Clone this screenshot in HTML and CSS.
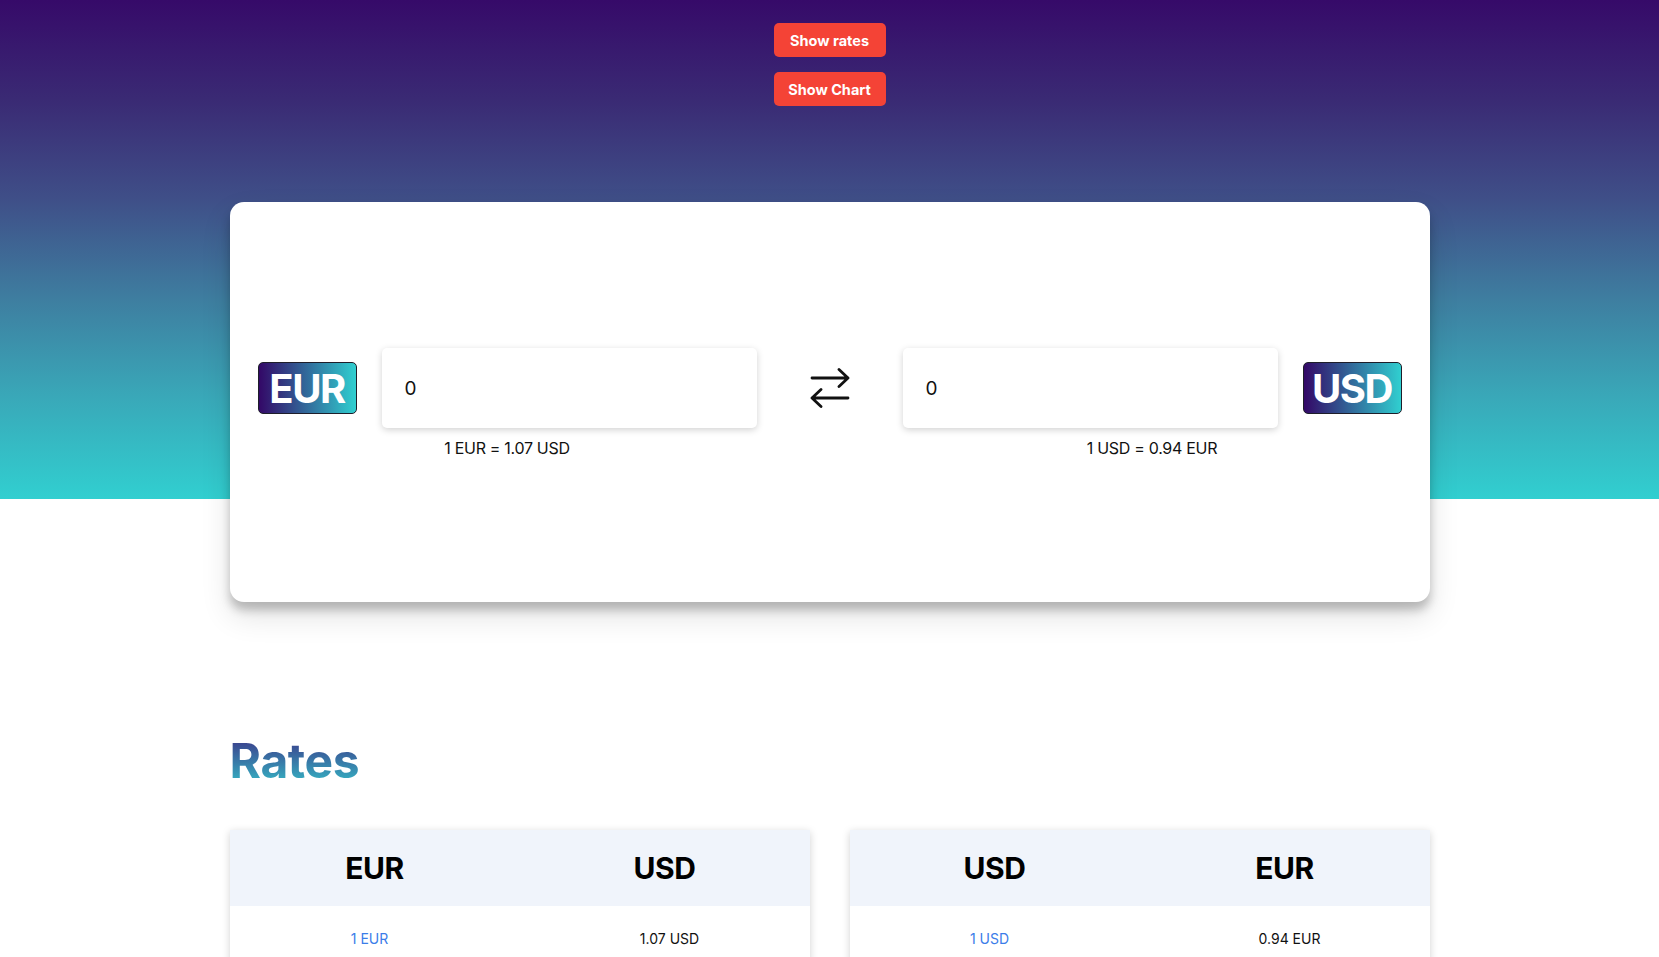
FILE: index.html
```html
<!DOCTYPE html>
<html lang="en">
<head>
<meta charset="utf-8">
<title>Currency Converter</title>
<link rel="stylesheet" href="styles.css">
</head>
<body>
  <header class="top-actions">
    <button class="btn-red" type="button">Show rates</button>
    <button class="btn-red" type="button">Show Chart</button>
  </header>

  <main class="container">
    <section class="converter-card">
      <div class="converter-row">
        <div class="side">
          <div class="side-row">
            <span class="badge">EUR</span>
            <div class="amount-input">0</div>
          </div>
          <p class="rate-note">1 EUR = 1.07 USD</p>
        </div>

        <div class="swap">
          <svg class="swap-icon" viewBox="0 0 40 40" width="40" height="40" fill="none" stroke="#111" stroke-width="2.8" stroke-linecap="round" stroke-linejoin="round">
            <path d="M2 10H38M29 1.5L38 10L29 18.5"/>
            <path d="M38 30H2M11 21.5L2 30L11 38.5"/>
          </svg>
        </div>

        <div class="side">
          <div class="side-row">
            <div class="amount-input">0</div>
            <span class="badge">USD</span>
          </div>
          <p class="rate-note">1 USD = 0.94 EUR</p>
        </div>
      </div>
    </section>

    <h1 class="rates-title">Rates</h1>

    <div class="rates-grid">
      <table class="rate-table">
        <thead>
          <tr><th>EUR</th><th>USD</th></tr>
        </thead>
        <tbody>
          <tr><td class="link">1 EUR</td><td>1.07 USD</td></tr>
          <tr><td class="link">5 EUR</td><td>5.35 USD</td></tr>
          <tr><td class="link">10 EUR</td><td>10.70 USD</td></tr>
          <tr><td class="link">25 EUR</td><td>26.75 USD</td></tr>
        </tbody>
      </table>
      <table class="rate-table">
        <thead>
          <tr><th>USD</th><th>EUR</th></tr>
        </thead>
        <tbody>
          <tr><td class="link">1 USD</td><td>0.94 EUR</td></tr>
          <tr><td class="link">5 USD</td><td>4.70 EUR</td></tr>
          <tr><td class="link">10 USD</td><td>9.40 EUR</td></tr>
          <tr><td class="link">25 USD</td><td>23.50 EUR</td></tr>
        </tbody>
      </table>
    </div>
  </main>
</body>
</html>
```

FILE: styles.css
```css
* { box-sizing: border-box; }

html, body { margin: 0; padding: 0; }

body {
  font-family: Inter, "Noto Sans", "Liberation Sans", sans-serif;
  color: #111;
  background-color: #fff;
  background-image: linear-gradient(to bottom,
    #360a69 0%,
    #3a2a74 20%,
    #3f4f88 40%,
    #3e7ea0 60%,
    #39a9b9 80%,
    #31cfd0 100%);
  background-repeat: no-repeat;
  background-size: 100% 499px;
}

.top-actions {
  display: flex;
  flex-direction: column;
  align-items: center;
  gap: 15px;
  padding-top: 23px;
}

.btn-red {
  width: 112px;
  height: 34px;
  border: none;
  border-radius: 5px;
  background: #f44336;
  color: #fff;
  font-family: Inter, "Liberation Sans", sans-serif;
  font-size: 14.5px;
  font-weight: 700;
  cursor: pointer;
}

.container {
  width: 1200px;
  margin: 0 auto;
}

.converter-card {
  margin-top: 96px;
  height: 400px;
  background: #fff;
  border-radius: 14px;
  box-shadow: 0 8px 10px rgba(0,0,0,0.22), 0 14px 30px rgba(0,0,0,0.12);
  display: flex;
  flex-direction: column;
  justify-content: center;
  padding: 0 28px;
}

.converter-row {
  display: flex;
  justify-content: space-between;
  align-items: flex-start;
  margin-top: 4px;
}

.side {
  display: flex;
  flex-direction: column;
  align-items: center;
}

.side-row {
  display: flex;
  align-items: center;
  gap: 25px;
}

.badge {
  width: 99px;
  height: 52px;
  display: flex;
  align-items: center;
  justify-content: center;
  border: 1.5px solid #1e1e2a;
  border-radius: 5px;
  background: linear-gradient(to right, #330867 0%, #30cfd0 100%);
  color: #fff;
  font-size: 40px;
  font-weight: 700;
  letter-spacing: -1.5px;
}

.amount-input {
  width: 375px;
  height: 80px;
  display: flex;
  align-items: center;
  padding-left: 23px;
  background: #fff;
  border-radius: 5px;
  box-shadow: 0 2px 7px rgba(0,0,0,0.18);
  font-size: 19px;
  color: #111;
}

.rate-note {
  margin: 8px 0 0;
  font-size: 16px;
  line-height: 24px;
  letter-spacing: -0.3px;
  color: #111;
}

.swap {
  height: 80px;
  display: flex;
  align-items: center;
}

.swap-icon { display: block; }

.rates-title {
  margin: 130px 0 0;
  font-size: 48px;
  line-height: 58px;
  font-weight: 700;
  letter-spacing: -0.4px;
  display: inline-block;
  background: linear-gradient(to bottom, #3b3a8a 10%, #35b5c4 90%);
  -webkit-background-clip: text;
  background-clip: text;
  color: transparent;
}

.rates-grid {
  display: grid;
  grid-template-columns: 1fr 1fr;
  gap: 40px;
  margin-top: 40px;
}

.rate-table {
  width: 100%;
  border-collapse: collapse;
  table-layout: fixed;
  background: #fff;
  box-shadow: 0 2px 8px rgba(0,0,0,0.18);
}

.rate-table th {
  height: 76px;
  background: #f0f4fb;
  font-size: 30px;
  font-weight: 700;
  letter-spacing: -0.5px;
  text-align: center;
  color: #000;
}

.rate-table td {
  padding: 23px 0;
  font-size: 14px;
  line-height: 20px;
  text-align: center;
  color: #111;
}

.rate-table td:first-child { padding-right: 10px; }
.rate-table td:last-child { padding-left: 10px; }

.rate-table td.link { color: #3b7de9; }
```
